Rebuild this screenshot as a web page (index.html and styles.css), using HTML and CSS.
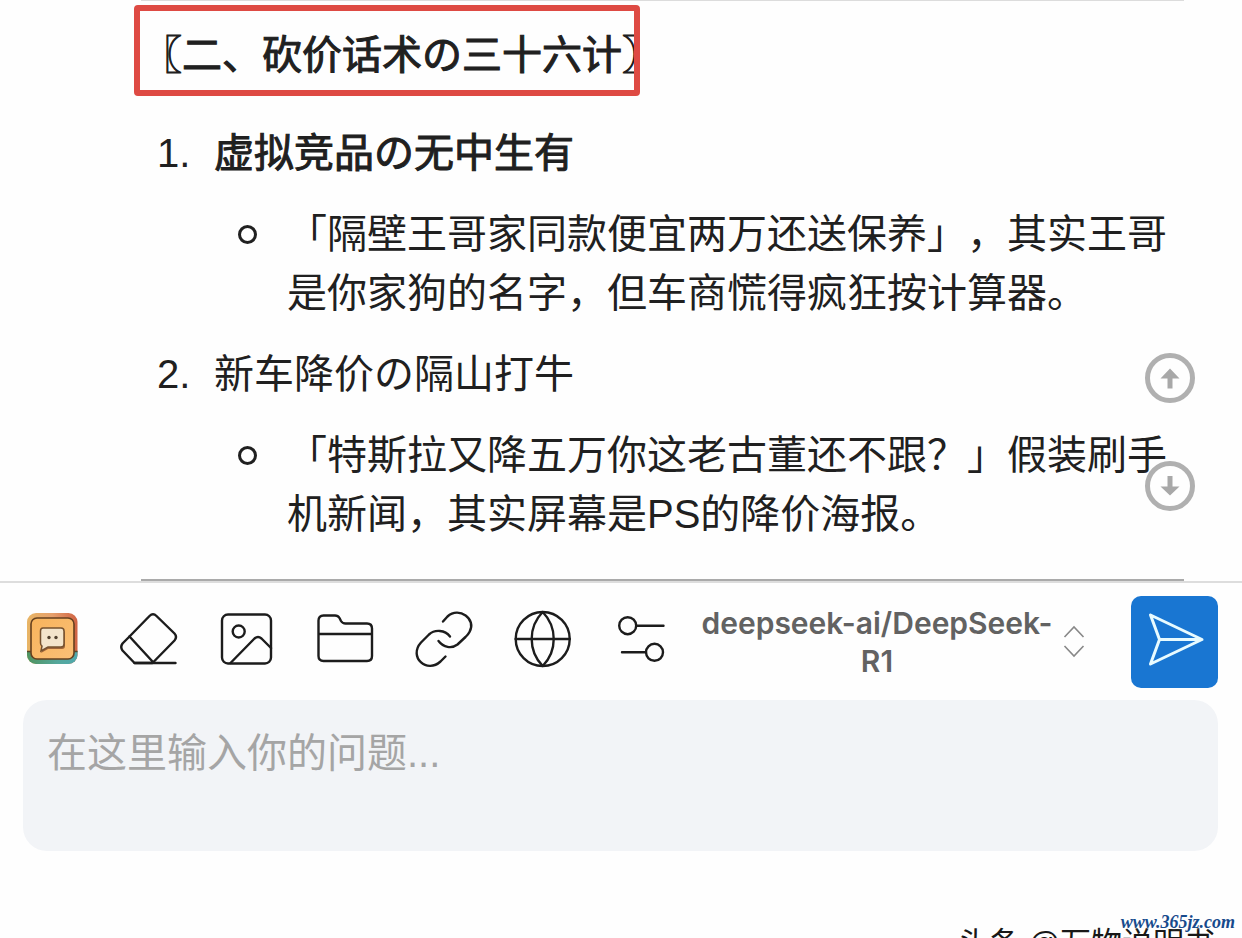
FILE: index.html
```html
<!DOCTYPE html>
<html lang="zh-CN">
<head>
<meta charset="utf-8">
<meta name="viewport" content="width=device-width, initial-scale=1">
<title>Chat</title>
<link rel="stylesheet" href="styles.css">
</head>
<body>
<main class="chat">
  <article class="message">
    <h2 class="heading">〖二、砍价话术の三十六计〗</h2>
    <ol class="steps">
      <li class="step">
        <div class="step-body">
          <strong class="step-title">虚拟竞品の无中生有</strong>
          <ul class="notes"><li class="note"><p>「隔壁王哥家同款便宜两万还送保养」，其实王哥是你家狗的名字，但车商慌得疯狂按计算器。</p></li></ul>
        </div>
      </li>
      <li class="step">
        <div class="step-body">
          <span class="step-title">新车降价の隔山打牛</span>
          <ul class="notes"><li class="note"><p>「特斯拉又降五万你这老古董还不跟？」假装刷手机新闻，其实屏幕是PS的降价海报。</p></li></ul>
        </div>
      </li>
    </ol>
  </article>
  <nav class="jump">
    <button class="jump-button" type="button" aria-label="上一条"><svg viewBox="0 0 50 50"><path d="M25 15.500L34.500 25.500H27.500V35.500H22.500V25.500H15.500Z"/></svg></button>
    <button class="jump-button" type="button" aria-label="下一条"><svg viewBox="0 0 50 50"><path d="M25 34.500L34.500 25.500H27.500V15H22.500V25.500H15.500Z"/></svg></button>
  </nav>
</main>

<form class="composer">
  <div class="toolbar">
    <div class="tools">
      <button class="tool" type="button" aria-label="助手">
        <svg viewBox="0 0 56 56">
          <defs>
            <linearGradient id="rim" x1="0" y1="0" x2="1" y2="0"><stop offset="0" stop-color="#e8b565"/><stop offset=".5" stop-color="#e6a06c"/><stop offset="1" stop-color="#cf6243"/></linearGradient>
            <linearGradient id="base" x1="0" y1="0" x2="1" y2="0"><stop offset="0" stop-color="#4f9360"/><stop offset=".6" stop-color="#55a79b"/><stop offset="1" stop-color="#4fa9ae"/></linearGradient>
            <linearGradient id="face" x1="0" y1="0" x2="1" y2="1"><stop offset="0" stop-color="#f7b35c"/><stop offset="1" stop-color="#fbc077"/></linearGradient>
          </defs>
          <rect x="3" y="2" width="50.500" height="51" rx="9" fill="url(#rim)"/>
          <path d="M3 40H53.500V44A9 9 0 0 1 44.500 53H12A9 9 0 0 1 3 44Z" fill="url(#base)"/>
          <path d="M3 40.500H7M50 40.500H53.500" stroke="#57472b" stroke-width="1.500"/>
          <rect x="7" y="7" width="43" height="41" rx="6" fill="url(#face)" stroke="#65401f" stroke-width="1.600"/>
          <path d="M20 19H38Q41 19 41 22V35Q41 38 38 38H24L17 42L19 37Q17 36 17 34V22Q17 19 20 19Z" fill="#a06538"/>
          <path d="M19 17H37Q40 17 40 20V33Q40 36 37 36H24L17 40L18 35Q16.500 34 16.500 32V20Q16.500 17 19 17Z" fill="#f3e4cb" stroke="#75512f" stroke-width="1.500"/>
          <circle cx="25" cy="26.500" r="1.700" fill="#51412f"/><circle cx="32" cy="26.500" r="1.700" fill="#51412f"/>
        </svg>
      </button>
      <button class="tool" type="button" aria-label="清除">
        <svg class="line" viewBox="0 0 56 56"><path d="M7.500 25.500L27.500 5Q31 1.500 34.500 5L52.500 22.500Q55.500 26 52.500 29.500L30.500 52H12.500L.500 39.500Q-2 36 .500 32.500Z"/><path d="M7.500 25.500L30.500 50.500M12.500 52H53.500"/></svg>
      </button>
      <button class="tool" type="button" aria-label="图片">
        <svg class="line" viewBox="0 0 56 56"><rect x="2" y="3.500" width="49" height="49" rx="6"/><circle cx="18.700" cy="20.500" r="6"/><path d="M10.500 52L34.500 27.500Q38 24.500 41.500 27.500L51 37"/></svg>
      </button>
      <button class="tool" type="button" aria-label="文件">
        <svg class="line" viewBox="0 0 56 56"><path d="M5.500 4.500H17Q20 4.500 21.500 7L23 10Q24.500 12.500 27.500 12.500H49Q54 12.500 54 17.500V45Q54 50 49 50H5.500Q.500 50 .500 45V9.500Q.500 4.500 5.500 4.500ZM.500 23H54"/></svg>
      </button>
      <button class="tool" type="button" aria-label="链接">
        <svg class="line" viewBox="0 0 56 56"><path d="M27 10.500L31.500 5.500C43 -5 61 8 53.500 21Q52.500 23 49.500 26L41.500 33.500C35.500 38 27.500 36.500 22.500 30M34 25.500C29 19 19 18 13 23.500L5 31.500C-8 46 11 63 24.500 50.500L29.500 45.500"/></svg>
      </button>
      <button class="tool" type="button" aria-label="联网">
        <svg class="line" viewBox="0 0 56 56"><circle cx="28.700" cy="28" r="27"/><path d="M1.700 28H55.700M28.700 1C14 16 14 40 28.700 55C43.400 40 43.400 16 28.700 1Z"/></svg>
      </button>
      <button class="tool" type="button" aria-label="设置">
        <svg class="line" viewBox="0 0 56 56"><circle cx="15.700" cy="14.700" r="8.500"/><circle cx="42.500" cy="41.300" r="8.500"/><path d="M24.500 14.700H51.500M10 41.300H34"/></svg>
      </button>
    </div>
    <label class="model">
      <span class="model-name">deepseek-ai/DeepSeek-R1</span>
      <svg class="chevrons" viewBox="0 0 20 32"><path d="M.500 11L10 1L19.500 11M.500 20L10 30L19.500 20"/></svg>
      <select class="model-select" aria-label="模型"><option>deepseek-ai/DeepSeek-R1</option></select>
    </label>
    <button class="send" type="submit" aria-label="发送"><svg viewBox="0 0 87 92"><path d="M19.500 19L71 43.500L19.500 68L28.500 43.500ZM28.500 43.500H71"/></svg></button>
  </div>
  <textarea class="question" aria-label="问题" placeholder="在这里输入你的问题..."></textarea>
</form>
<div class="credit">头条 @万物说明书</div>
<div class="site">www.365jz.com</div>
</body>
</html>
```
FILE: styles.css
```css
*, *::before, *::after { box-sizing: border-box; }
body {
  margin: 0;
  min-height: 100vh;
  position: relative;
  overflow: hidden;
  background: #fefefe;
  color: #202020;
  font: 40px/59px "Liberation Sans", "Noto Sans CJK SC", sans-serif;
  text-spacing-trim: space-all;
}
button { padding: 0; border: 0; background: none; color: inherit; cursor: pointer; }
svg { display: block; width: 100%; height: 100%; overflow: visible; }
p, ol, ul, h2 { margin: 0; padding: 0; }

.chat { position: relative; padding: 0 58px 0 141px; }
.message {
  padding: 25px 0 35px 1px;
  border-top: 1px solid #dcdcdc;
  border-bottom: 2px solid #aaaaaa;
}
.heading, strong.step-title {
  font-size: 40px;
  font-weight: 400;
  -webkit-text-stroke: 1px #202020;
}
.heading { position: relative; width: max-content; }
.heading::after {
  content: "";
  position: absolute;
  inset: -21px 22px -11px -8px;
  border: 6px solid #de4a43;
  border-radius: 4px;
}
.steps { display: grid; gap: 22px; margin: 39px 0 0 15px; list-style: none; counter-reset: step; }
.step { display: grid; grid-template-columns: 57px 1fr; counter-increment: step; }
.step::before { content: counter(step) "."; }
.step-body { display: grid; gap: 22px; }
.notes { margin-left: 24px; list-style: none; }
.note { display: grid; grid-template-columns: 49px 1fr; }
.note::before {
  content: "";
  width: 19px;
  height: 19px;
  margin-top: 20px;
  border: 3px solid #202020;
  border-radius: 50%;
}

.jump { position: absolute; right: 47px; bottom: 70px; display: grid; gap: 58px; }
.jump-button {
  width: 50px;
  height: 50px;
  border: 5px solid #b0b0b0;
  border-radius: 50%;
  background: #fefefe;
}
.jump-button svg { width: 50px; height: 50px; margin: -5px; fill: #a8a8a8; }

.composer { border-top: 2px solid #dddddd; padding: 0 24px 0 23px; }
.toolbar { display: flex; align-items: center; height: 117px; padding-left: 1px; }
.tools { display: flex; gap: 42px; padding-bottom: 6px; }
.tool { width: 56px; height: 56px; }
.line { fill: none; stroke: #1c1c1c; stroke-width: 2.4; stroke-linecap: round; stroke-linejoin: round; }
.model {
  position: relative;
  display: flex;
  flex: 1;
  gap: 10px;
  align-items: center;
  margin: 0 47px 0 32px;
  color: #626262;
  font: 600 30px/38px Inter, sans-serif;
  text-align: center;
}
.model-name { flex: 1; }
.chevrons { width: 20px; height: 32px; flex: none; fill: none; stroke: #888888; stroke-width: 1.6; }
.model-select { position: absolute; inset: 0; width: 100%; height: 100%; opacity: 0; }
.send { width: 87px; height: 92px; border-radius: 10px; background: #1976d2; }
.send path { fill: none; stroke: #e8fbff; stroke-width: 3; stroke-linejoin: round; }
.question {
  display: block;
  width: 100%;
  height: 151px;
  padding: 24px;
  border: 0;
  border-radius: 24px;
  background: #f2f4f7;
  color: #202020;
  font: inherit;
  resize: none;
  outline: 0;
}
.question::placeholder { color: #a5a5a5; opacity: 1; }

.credit {
  position: absolute;
  right: 27px;
  bottom: -28px;
  color: #181818;
  font-size: 31px;
  line-height: 44px;
  white-space: nowrap;
}
.site {
  position: absolute;
  right: 7px;
  bottom: 4px;
  color: #174a8c;
  font: italic 700 18px/24px "Liberation Serif", serif;
  text-shadow: 0 0 2px #ffffff, 0 0 3px #ffffff;
}
```
